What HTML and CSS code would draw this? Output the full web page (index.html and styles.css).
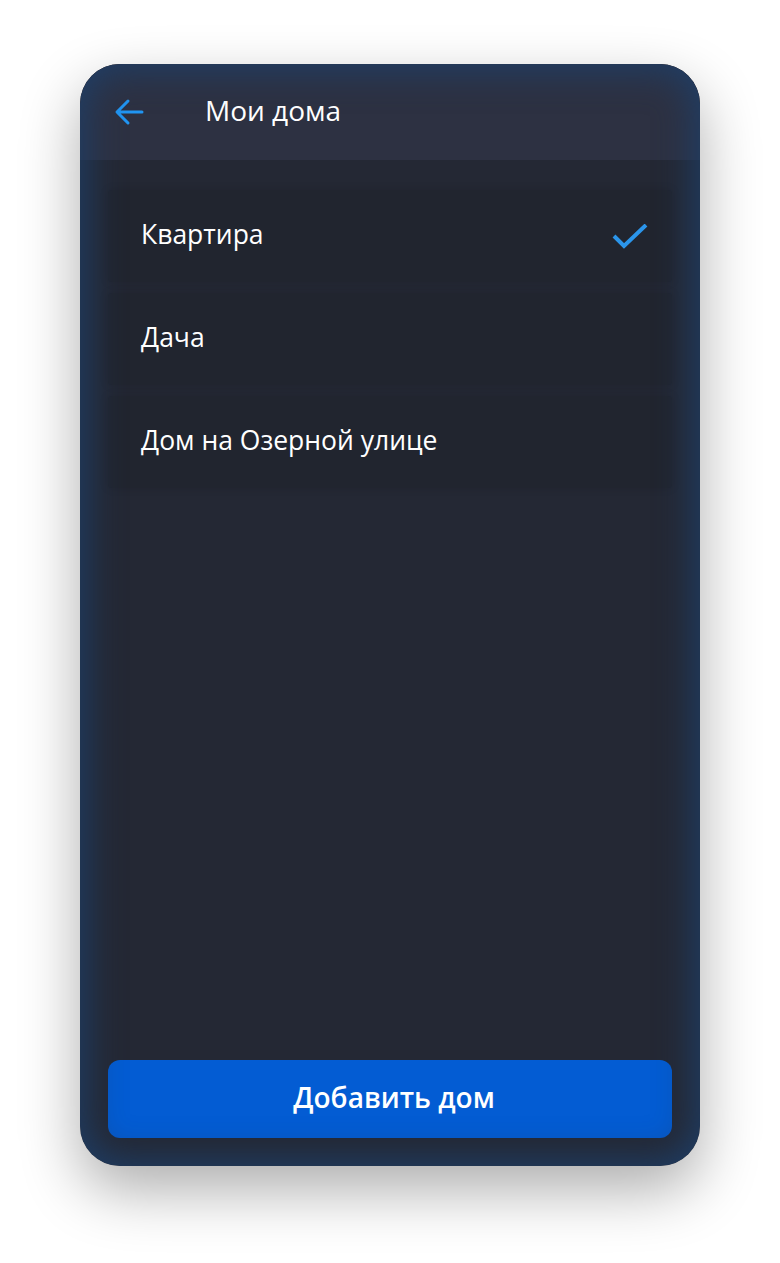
FILE: index.html
```html
<!DOCTYPE html>
<html lang="ru">
<head>
<meta charset="utf-8">
<title>Мои дома</title>
<link rel="stylesheet" href="styles.css">
</head>
<body>
<div class="phone">
  <header class="topbar">
    <svg class="back" width="30" height="28" viewBox="0 0 30 28" aria-hidden="true">
      <path d="M28 14H4M14 3L3 14l11 11" fill="none" stroke="#2196f3" stroke-width="3" stroke-linecap="round" stroke-linejoin="round"/>
    </svg>
    <h1 class="title">Мои дома</h1>
  </header>
  <main class="content">
    <ul class="list">
      <li class="item">
        <span class="name">Квартира</span>
        <svg class="check" width="36" height="28" viewBox="0 0 36 28" aria-hidden="true">
          <path d="M2 12l10 10L34 1" fill="none" stroke="#2b95ea" stroke-width="4"/>
        </svg>
      </li>
      <li class="item"><span class="name">Дача</span></li>
      <li class="item"><span class="name">Дом на Озерной улице</span></li>
    </ul>
    <button class="add">Добавить дом</button>
  </main>
</div>
</body>
</html>
```

FILE: styles.css
```css
html, body {
  margin: 0;
  background: #ffffff;
  min-height: 100%;
}
body {
  padding: 64px 80px 97px;
  font-family: "Open Sans", "Noto Sans", sans-serif;
}
.phone {
  width: 620px;
  height: 1102px;
  border-radius: 40px;
  overflow: hidden;
  background: #242834;
  display: flex;
  flex-direction: column;
  position: relative;
  box-shadow: 0 24px 60px rgba(0, 0, 0, 0.32);
}
.phone::after {
  content: "";
  position: absolute;
  inset: 0;
  border-radius: 40px;
  box-shadow: inset 0 0 36px 6px rgba(30, 64, 108, 0.9);
  pointer-events: none;
}
.topbar {
  height: 96px;
  flex: none;
  background: #2d3142;
  display: flex;
  align-items: center;
  padding-left: 34px;
  padding-bottom: 4px;
  box-sizing: border-box;
}
.back {
  display: block;
  margin-top: 4px;
}
.title {
  margin: 0 0 0 61px;
  font-size: 28px;
  font-weight: 400;
  color: #ffffff;
  line-height: 1;
}
.content {
  flex: 1;
  display: flex;
  flex-direction: column;
  padding: 30px 28px 28px;
}
.list {
  list-style: none;
  margin: 0;
  padding: 0;
  display: flex;
  flex-direction: column;
  gap: 11px;
  flex: 1;
}
.item {
  height: 92px;
  box-sizing: border-box;
  display: flex;
  align-items: center;
  justify-content: space-between;
  padding: 0 24px 3px 33px;
  background: #21252f;
  box-shadow: 0 0 10px rgba(0, 0, 0, 0.12);
  border-radius: 4px;
}
.name {
  font-size: 26.5px;
  color: #ffffff;
  line-height: 1;
}
.check {
  display: block;
  margin-top: 7px;
}
.add {
  height: 78px;
  border: none;
  border-radius: 12px;
  background: #035cd3;
  color: #ffffff;
  font-family: "Open Sans", "Noto Sans", sans-serif;
  font-size: 28px;
  font-weight: 600;
  cursor: pointer;
  padding: 0 0 4px 8px;
}
```
